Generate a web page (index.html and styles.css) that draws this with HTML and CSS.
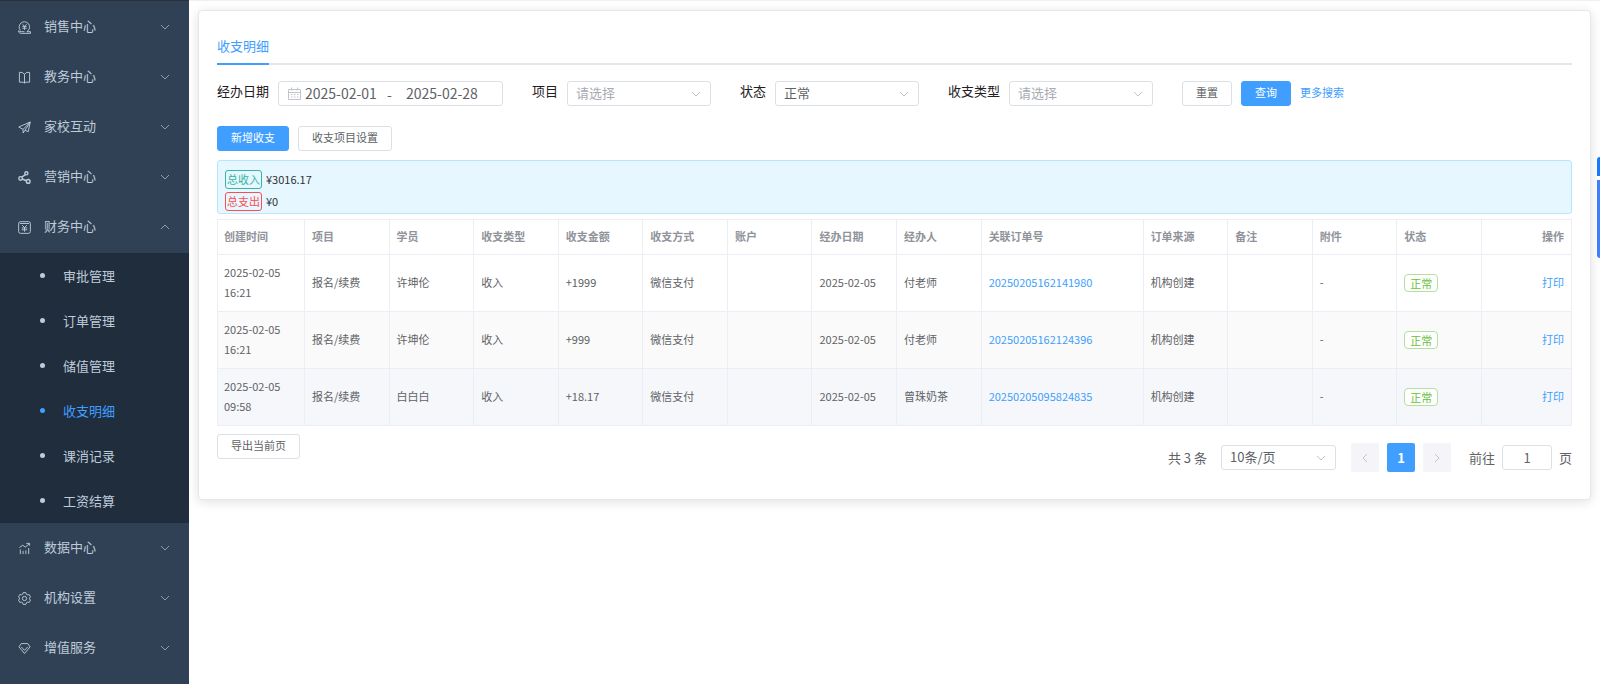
FILE: index.html
```html
<!DOCTYPE html>
<html lang="zh-CN">
<head>
<meta charset="utf-8">
<title>收支明细</title>
<link rel="stylesheet" href="styles.css">
</head>
<body>
<svg class="defs" width="0" height="0" aria-hidden="true">
  <symbol id="chev" viewBox="0 0 12 12"><path d="M2 4l4 4 4-4"/></symbol>
  <symbol id="chev-up" viewBox="0 0 12 12"><path d="M2 8l4-4 4 4"/></symbol>
  <symbol id="chev-left" viewBox="0 0 12 12"><path d="M8 2L4 6l4 4"/></symbol>
  <symbol id="chev-right" viewBox="0 0 12 12"><path d="M4 2l4 4-4 4"/></symbol>
</svg>
<div class="app">
  <nav class="sidebar">
    <a class="menu" href="#"><svg class="icon" viewBox="0 0 14 14"><path d="M2.500 10A5.600 5.600 0 1 1 11 10.200L9.500 11.500h4v1.800H3.500C1.500 13.300.5 12 .5 10.500c1 .8 2 1 3.500 1h3M4.800 3.500L7 5.700l2.200-2.200M7 5.700v3.800M4.700 6h4.600M4.700 7.800h4.600"/></svg><span>销售中心</span><svg class="arrow"><use href="#chev"/></svg></a>
    <a class="menu" href="#"><svg class="icon" viewBox="0 0 14 14"><path d="M7 3.500v9.500M7 3.500L4.500 1.500H1.500v10.500H5.500L7 13l1.500-1h4V1.500H9.500z"/></svg><span>教务中心</span><svg class="arrow"><use href="#chev"/></svg></a>
    <a class="menu" href="#"><svg class="icon" viewBox="0 0 14 14"><path d="M.8 6.500L13.200 1 11 11.500 7.500 10 5.500 13V9L.8 6.500M5.500 9L13 1.200M7.500 10L13 1.500"/></svg><span>家校互动</span><svg class="arrow"><use href="#chev"/></svg></a>
    <a class="menu" href="#"><svg class="icon bold" viewBox="0 0 14 14"><circle cx="2.800" cy="8" r="1.900"/><circle cx="9" cy="2.500" r="1.700"/><circle cx="11" cy="11.200" r="2"/><path d="M4 6.500L8 4M4.600 8.600l4.500 1.900"/></svg><span>营销中心</span><svg class="arrow"><use href="#chev"/></svg></a>
    <a class="menu" href="#"><svg class="icon" viewBox="0 0 14 14"><rect x=".7" y=".7" width="12.600" height="12.600" rx="2"/><path d="M2 2.700h10M4.500 4.500L7 7l2.500-2.500M7 7v4.500M4 7.500h6M4 9.500h6"/></svg><span>财务中心</span><svg class="arrow"><use href="#chev-up"/></svg></a>
    <div class="submenu">
      <a href="#">审批管理</a>
      <a href="#">订单管理</a>
      <a href="#">储值管理</a>
      <a class="active" href="#">收支明细</a>
      <a href="#">课消记录</a>
      <a href="#">工资结算</a>
    </div>
    <a class="menu" href="#"><svg class="icon" viewBox="0 0 14 14"><path d="M2.500 8v5M5.500 9.500v3.500M8.500 9v4M11.500 6.500V13M1.500 6L5 3.500l3 2 4-3.500M9 1.500h3.500V4"/></svg><span>数据中心</span><svg class="arrow"><use href="#chev"/></svg></a>
    <a class="menu" href="#"><svg class="icon" viewBox="0 0 14 14"><path d="M5.500.7h3l.5 1.700 1.300.7 1.700-.4 1.500 2.600-1.200 1.200v1l1.200 1.200-1.500 2.600-1.700-.4-1.300.7-.5 1.700h-3L5 11.600l-1.300-.7-1.700.4L.5 8.700l1.200-1.200v-1L.5 5.300 2 2.700l1.700.4L5 2.400z"/><circle cx="7" cy="7" r="2.300"/></svg><span>机构设置</span><svg class="arrow"><use href="#chev"/></svg></a>
    <a class="menu" href="#"><svg class="icon" viewBox="0 0 14 14"><path d="M3.500 1.700h7L13 5.200l-6 7.300-6-7.300zM3.500 5.200L7 9l3.500-3.800"/></svg><span>增值服务</span><svg class="arrow"><use href="#chev"/></svg></a>
  </nav>

  <main class="main">
    <section class="card">
      <div class="tabs"><a class="tab" href="#">收支明细</a></div>

      <form class="filters">
        <div class="field"><label for="from">经办日期</label>
          <div class="range">
            <svg class="calendar" viewBox="0 0 13 13"><path d="M.5 2.500h12v10H.5zM.5 5.500h12M3.500.5v3M9.500.5v3M3 7.500h1.500M6 7.500h1.500M9 7.500h1.500M3 10h1.500M6 10h1.500M9 10h1.500"/></svg>
            <input id="from" type="text" value="2025-02-01"><span>-</span><input type="text" aria-label="结束日期" value="2025-02-28">
          </div>
        </div>
        <div class="field"><label for="item">项目</label><div class="select empty"><select id="item"><option>请选择</option></select><svg><use href="#chev"/></svg></div></div>
        <div class="field"><label for="state">状态</label><div class="select"><select id="state"><option>正常</option></select><svg><use href="#chev"/></svg></div></div>
        <div class="field"><label for="type">收支类型</label><div class="select empty"><select id="type"><option>请选择</option></select><svg><use href="#chev"/></svg></div></div>
        <div class="actions"><button class="btn" type="button">重置</button><button class="btn primary" type="button">查询</button><a class="more" href="#">更多搜索</a></div>
      </form>

      <div class="toolbar"><button class="btn primary" type="button">新增收支</button><button class="btn" type="button">收支项目设置</button></div>

      <div class="summary">
        <div class="total"><span class="tag income">总收入</span><span>¥3016.17</span></div>
        <div class="total"><span class="tag expense">总支出</span><span>¥0</span></div>
      </div>

      <table class="grid">
        <colgroup><col class="c-time"><col><col><col><col><col><col><col><col><col class="c-order"><col><col><col><col><col class="c-op"></colgroup>
        <thead><tr><th>创建时间</th><th>项目</th><th>学员</th><th>收支类型</th><th>收支金额</th><th>收支方式</th><th>账户</th><th>经办日期</th><th>经办人</th><th>关联订单号</th><th>订单来源</th><th>备注</th><th>附件</th><th>状态</th><th>操作</th></tr></thead>
        <tbody>
          <tr><td>2025-02-05 16:21</td><td>报名/续费</td><td>许坤伦</td><td>收入</td><td>+1999</td><td>微信支付</td><td></td><td>2025-02-05</td><td>付老师</td><td><a href="#">20250205162141980</a></td><td>机构创建</td><td></td><td>-</td><td><span class="status">正常</span></td><td><a href="#">打印</a></td></tr>
          <tr class="striped"><td>2025-02-05 16:21</td><td>报名/续费</td><td>许坤伦</td><td>收入</td><td>+999</td><td>微信支付</td><td></td><td>2025-02-05</td><td>付老师</td><td><a href="#">20250205162124396</a></td><td>机构创建</td><td></td><td>-</td><td><span class="status">正常</span></td><td><a href="#">打印</a></td></tr>
          <tr class="hovered"><td>2025-02-05 09:58</td><td>报名/续费</td><td>白白白</td><td>收入</td><td>+18.17</td><td>微信支付</td><td></td><td>2025-02-05</td><td>曾珠奶茶</td><td><a href="#">20250205095824835</a></td><td>机构创建</td><td></td><td>-</td><td><span class="status">正常</span></td><td><a href="#">打印</a></td></tr>
        </tbody>
      </table>

      <footer class="footer">
        <button class="btn" type="button">导出当前页</button>
        <div class="pager">
          <span>共 3 条</span>
          <div class="select size"><select aria-label="每页条数"><option>10条/页</option></select><svg><use href="#chev"/></svg></div>
          <div class="pages">
            <button type="button" aria-label="上一页" disabled><svg><use href="#chev-left"/></svg></button>
            <button class="current" type="button">1</button>
            <button type="button" aria-label="下一页" disabled><svg><use href="#chev-right"/></svg></button>
          </div>
          <div class="jump"><label for="page">前往</label><input id="page" type="text" value="1"><span>页</span></div>
        </div>
      </footer>
    </section>
  </main>
</div>
<aside class="helper"></aside>
</body>
</html>
```
FILE: styles.css
```css
* { box-sizing: border-box; }
body {
  margin: 0;
  background: #fff;
  color: #606266;
  font: 13px/20px "Noto Sans CJK SC", sans-serif;
}
a { color: #409eff; text-decoration: none; }
svg { display: block; fill: none; stroke: currentColor; }
input, select, button { font: inherit; color: inherit; }
.defs { position: absolute; }
.app { display: flex; min-height: 100vh; }

.sidebar {
  flex: none;
  width: 189px;
  padding-top: 1px;
  background: #304156;
  border-top: 1px solid #2b2f3a;
}
.menu {
  display: flex;
  align-items: center;
  height: 50px;
  padding: 0 18px;
  color: #bfcbd9;
}
.menu span { padding-bottom: 2px; }
.icon { width: 13px; height: 13px; margin-right: 13px; }
.icon.bold { stroke-width: 1.500; }
.arrow { width: 12px; height: 12px; margin-left: auto; color: #909daf; }
.submenu { margin: 1px 0 0; background: #1f2d3d; }
.submenu a {
  display: flex;
  align-items: center;
  height: 45px;
  padding-left: 40px;
  color: #bfcbd9;
}
.submenu a::before {
  content: "";
  width: 5px;
  height: 5px;
  margin-right: 18px;
  border-radius: 50%;
  background: currentColor;
}
.submenu a.active { color: #409eff; }

.main {
  flex: 1;
  min-width: 0;
  padding: 9px 9px 0;
  border-top: 1px solid #f0f0f0;
}
.card {
  padding: 25px 18px 27px;
  border: 1px solid #e4e7ed;
  border-radius: 4px;
  background: #fff;
  box-shadow: 0 2px 12px rgba(0, 0, 0, .12);
}
.tabs { display: flex; border-bottom: 2px solid #e4e7ed; }
.tab {
  margin-bottom: -2px;
  padding-bottom: 7px;
  border-bottom: 2px solid #409eff;
}

.filters { display: flex; gap: 29px; margin-top: 16px; }
.field { display: flex; gap: 9px; }
.field label { color: #1f2023; }
.range, .select select, .jump input {
  height: 25px;
  border: 1px solid #dcdfe6;
  border-radius: 3px;
  background: #fff;
}
.range { display: flex; align-items: center; width: 225px; padding-left: 9px; font-size: 14px; }
.range span { width: 13px; text-align: center; margin-right: 10px; }
.range input { width: 78px; padding: 0 0 2px; border: 0; background: none; }
.calendar { width: 13px; height: 13px; margin-right: 4px; color: #c0c4cc; }
.select { position: relative; width: 144px; }
.select select { display: block; width: 100%; padding: 0 8px 1px; appearance: none; line-height: 22px; }
.select.empty select { color: #a8abb2; }
.select svg {
  position: absolute;
  top: 7px;
  right: 9px;
  width: 12px;
  height: 12px;
  color: #c0c4cc;
  pointer-events: none;
}
.actions, .toolbar { display: flex; gap: 9px; }
.btn {
  height: 25px;
  padding: 0 13px 3px;
  border: 1px solid #dcdfe6;
  border-radius: 3px;
  background: #fff;
  font-size: 11px;
  line-height: 20px;
}
.btn.primary { border-color: #409eff; background: #409eff; color: #fff; }
.more { font-size: 11px; line-height: 22px; }
.toolbar { margin-top: 20px; }

.summary {
  display: grid;
  gap: 3px;
  margin: 9px 0 5px;
  padding: 9px 7px 2px;
  border: 1px solid #b8e6fd;
  border-radius: 3px;
  background: #e6f7ff;
  color: #303133;
  font-size: 11px;
}
.total { display: flex; align-items: center; gap: 4px; line-height: 17px; }
.tag { padding: 0 1px; border: 1px solid; border-radius: 3px; }
.income { color: #36b5a2; }
.expense { color: #ff4d4f; }

.grid {
  width: 100%;
  table-layout: fixed;
  border-collapse: collapse;
  font-size: 11px;
}
.c-time { width: 87px; }
.c-order { width: 162px; }
.c-op { width: 90px; }
.grid th, .grid td { padding: 0 7px 3px; border: 1px solid #ebeef5; text-align: left; }
.grid th { height: 35px; color: #909399; font-weight: 700; }
.grid td { height: 57px; }
.grid td:first-child, .grid th:first-child { padding-left: 6px; }
.grid th:last-child, .grid td:last-child { text-align: right; }
.striped { background: #fafafa; }
.hovered { background: #f5f7fa; }
.status {
  display: inline-block;
  margin-top: 3px;
  padding: 0 5px;
  border: 1px solid #b3e19d;
  border-radius: 4px;
  background: #fff;
  color: #67c23a;
  line-height: 16px;
}

.footer { display: flex; justify-content: space-between; align-items: flex-start; margin-top: 8px; }
.pager { display: flex; align-items: center; margin-top: 9px; }
.select.size { width: 115px; margin: 0 15px 0 14px; }
.pages { display: flex; gap: 8px; }
.pages button {
  display: flex;
  align-items: center;
  justify-content: center;
  width: 28px;
  height: 29px;
  padding: 0;
  border: 0;
  border-radius: 2px;
  background: #f4f4f9;
  color: #c0c4cc;
}
.pages svg { width: 12px; height: 12px; }
.pages .current { background: #409eff; color: #fff; font-weight: 700; }
.jump { display: flex; align-items: center; gap: 7px; margin-left: 18px; }
.jump input { width: 50px; padding: 0; text-align: center; }

.helper {
  position: fixed;
  top: 157px;
  right: 0;
  width: 3px;
  height: 101px;
  border-radius: 6px 0 0 6px;
  background: linear-gradient(#1677ff 19px, #fff 19px, #fff 23px, #3d7fff 23px);
}
```
